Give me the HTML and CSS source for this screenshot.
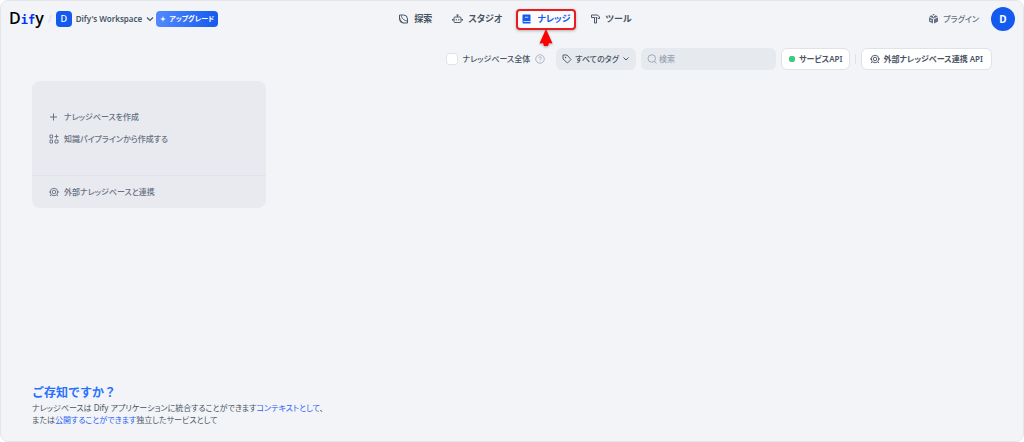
FILE: index.html
```html
<!DOCTYPE html>
<html lang="ja">
<head>
<meta charset="utf-8">
<meta name="viewport" content="width=device-width, initial-scale=1">
<title>ナレッジ - Dify</title>
<link rel="stylesheet" href="styles.css">
</head>
<body>
<svg class="defs" width="0" height="0" aria-hidden="true">
  <symbol id="target" viewBox="0 0 20 20"><g fill="none" stroke="currentColor" stroke-width="1.8"><circle cx="10" cy="10" r="7.500"/><circle cx="10" cy="10" r="3.500"/><path d="M0 10h3M17 10h3M4 16l-2 2M16 16l2 2"/></g></symbol>
</svg>
<div class="app">
  <header class="header">
    <div class="brand">
      <a class="logo" href="#">D<span class="logo-accent">if</span>y</a>
      <span class="slash">/</span>
      <button class="workspace" type="button">
        <span class="workspace-icon">D</span>
        <span>Dify's Workspace</span>
        <svg class="chevron" viewBox="0 0 8 8"><path d="M1 2.500l3 3 3-3" fill="none" stroke="currentColor" stroke-width="1.200"/></svg>
      </button>
      <button class="upgrade" type="button">
        <svg class="spark" viewBox="0 0 8 8"><path d="M4 0l.9 3.100L8 4l-3.100.9L4 8l-.9-3.100L0 4l3.100-.9z" fill="currentColor"/></svg>
        <span>アップグレード</span>
      </button>
    </div>
    <nav class="nav">
      <a class="nav-item" href="#">
        <svg class="nav-icon" viewBox="0 0 20 20"><g fill="none" stroke="currentColor" stroke-width="2"><path d="M2 2h8a8 8 0 0 1 8 8v8h-8a8 8 0 0 1-8-8z"/><path d="M6 3c-1 5 6 11 12 11M2 7c1 6 4 9 8 11"/></g></svg>
        <span>探索</span>
      </a>
      <a class="nav-item" href="#">
        <svg class="nav-icon" viewBox="0 0 22 20"><g fill="none" stroke="currentColor" stroke-width="1.900"><rect x="4" y="6" width="14" height="11" rx="2"/><path d="M11 6V2M8.500 2h5M1 10v3M21 10v3M8.500 10v3M13.500 10v3"/><path d="M1 11.500h3M18 11.500h3"/></g></svg>
        <span>スタジオ</span>
      </a>
      <a class="nav-item nav-item-active" href="#" aria-current="page">
        <svg class="nav-icon" viewBox="0 0 20 20"><path d="M4 1h13a1 1 0 0 1 1 1v17H4a2 2 0 0 1-2-2V3a2 2 0 0 1 2-2z" fill="currentColor"/><path d="M6.500 6.500h7" stroke="#fff" stroke-width="1.500"/><path d="M4 15h14" stroke="#fff" stroke-width="1.500"/></svg>
        <span>ナレッジ</span>
        <svg class="pointer" viewBox="0 0 14 18" aria-hidden="true"><path d="M7 0l6.500 14.500-3.500-.5L9 17H5l-1-3-3.500.5z" fill="#f00"/></svg>
      </a>
      <a class="nav-item" href="#">
        <svg class="nav-icon" viewBox="0 0 20 20"><path d="M2 2h12l4 4v3h-3l-2-2h-1v11H8V7H2z" fill="none" stroke="currentColor" stroke-width="2"/><path d="M8 7h5" stroke="currentColor"/></svg>
        <span>ツール</span>
      </a>
    </nav>
    <div class="account">
      <a class="plugins" href="#">
        <svg class="nav-icon" viewBox="0 0 20 20"><path d="M10 0l3 1.500L10 3 7 1.500zM5.500 2.500L9 4.300v2l1 .5 1-.5v-2l3.500-1.800L18.500 5 10 9 1.500 5zM1 6.500l8 4V19l-8-4zM19 6.500l-8 4V19l8-4z" fill="currentColor"/><path d="M3.500 11l2.500 1.200v2.300L3.500 13.300z" fill="#f2f4f7"/></svg>
        <span>プラグイン</span>
      </a>
      <button class="avatar" type="button">D</button>
    </div>
  </header>
  <main class="main">
    <div class="toolbar">
      <label class="all"><input class="check" type="checkbox"><span>ナレッジベース全体</span></label>
      <svg class="help" viewBox="0 0 20 20"><g fill="none" stroke="currentColor" stroke-width="1.500"><circle cx="10" cy="10" r="8.500"/><path d="M7.500 8a2.500 2.500 0 1 1 3.500 2.300c-.7.300-1 .7-1 1.700M10 13.500v1.500"/></g></svg>
      <button class="tags" type="button">
        <svg class="tool-icon" viewBox="0 0 20 20"><path d="M2 2h8l8 9-7 7-9-8z" fill="none" stroke="currentColor" stroke-width="1.800" stroke-linejoin="round"/><circle cx="7" cy="7" r="1.500" fill="currentColor"/></svg>
        <span>すべてのタグ</span>
        <svg class="chevron" viewBox="0 0 8 8"><path d="M1.500 2.500L4 5l2.500-2.500" fill="none" stroke="currentColor"/></svg>
      </button>
      <label class="search">
        <svg class="tool-icon" viewBox="0 0 20 20"><path d="M14 14l5 5M17 9A7.500 7.500 0 1 1 2 9a7.500 7.500 0 0 1 15 0z" fill="none" stroke="currentColor" stroke-width="1.800"/></svg>
        <input class="search-input" type="text" placeholder="検索" aria-label="検索">
      </label>
      <button class="btn btn-service" type="button"><span class="dot"></span><span>サービスAPI</span></button>
      <span class="divider"></span>
      <button class="btn btn-external" type="button"><svg class="tool-icon"><use href="#target"/></svg><span>外部ナレッジベース連携 API</span></button>
    </div>
    <section class="card">
      <div class="card-actions">
        <a class="card-link" href="#"><svg class="card-icon" viewBox="0 0 20 20"><path d="M9 3v14M2 10h14" stroke="currentColor" stroke-width="2"/></svg><span>ナレッジベースを作成</span></a>
        <a class="card-link" href="#"><svg class="card-icon" viewBox="0 0 20 20"><path d="M2 2h5v6H2zM2 12h5v6H2zM12 12h6v6h-6zM15 1v8M11 5h8" fill="none" stroke="currentColor" stroke-width="1.800"/></svg><span>知識パイプラインから作成する</span></a>
      </div>
      <a class="card-link card-footer" href="#"><svg class="card-icon"><use href="#target"/></svg><span>外部ナレッジベースと連携</span></a>
    </section>
  </main>
  <footer class="footer">
    <h2 class="footer-title">ご存知ですか？</h2>
    <p class="footer-text">ナレッジベースは Dify アプリケーションに統合することができます<a class="link" href="#">コンテキストとして</a>、<br>または<a class="link" href="#">公開することができます</a>独立したサービスとして</p>
  </footer>
</div>
</body>
</html>
```
FILE: styles.css
```css
* { box-sizing: border-box; }
body {
  margin: 0;
  background: #fff;
  color: #495464;
  font-family: "Noto Sans", "Noto Sans CJK JP", sans-serif;
  font-size: 8px;
  line-height: 16px;
  font-feature-settings: "palt";
}
button, input { font: inherit; font-feature-settings: inherit; color: inherit; margin: 0; }
button { border: 0; padding: 0; background: none; white-space: nowrap; }
a { color: inherit; text-decoration: none; }
svg { flex: none; display: block; }
.defs { position: absolute; }
.app {
  min-height: 100vh;
  display: flex;
  flex-direction: column;
  background: #f2f4f7;
  border: 1px solid #e4e6ea;
  border-radius: 8px;
}
.header {
  display: grid;
  grid-template-columns: 1fr auto 1fr;
  align-items: center;
  height: 36px;
  padding: 0 8px;
}
.brand { display: flex; align-items: center; }
.logo { font-family: "Open Sans", sans-serif; font-size: 16px; line-height: 20px; font-weight: 600; color: #000; }
.logo-accent { color: #0033ff; font-family: "DejaVu Sans Mono", monospace; font-size: 12px; font-weight: 700; }
.slash { width: 12px; font-size: 10px; text-align: center; color: #d5d9e0; }
.workspace { display: flex; align-items: center; gap: 4px; font-weight: 600; }
.workspace-icon { width: 16px; height: 16px; border-radius: 4px; background: #155aef; color: #fff; font-size: 9px; font-weight: 500; }
.chevron { width: 8px; height: 8px; }
.upgrade {
  display: flex;
  align-items: center;
  gap: 3px;
  height: 16px;
  margin-left: 2px;
  padding: 0 4px;
  border-radius: 4px;
  background: linear-gradient(90deg, #5289ff, #155aef);
  color: #fff;
  font-size: 7px;
  font-weight: 700;
}
.spark { width: 6px; height: 6px; }
.nav { display: flex; align-items: center; gap: 8px; margin-left: 6px; font-size: 9px; font-weight: 600; }
.nav-item { position: relative; display: flex; align-items: center; gap: 5px; height: 21px; padding: 0 6px; white-space: nowrap; }
.nav-item-active { padding: 0 3px; color: #155aef; background: #fcfcfd; border: 2px solid #e91c24; border-radius: 4px; box-shadow: 0 1px 3px #0004; }
.nav-icon { width: 11px; height: 10px; }
.pointer { position: absolute; top: 18px; left: calc(50% - 7px); width: 14px; height: 18px; filter: drop-shadow(0 1px 1px #0005); }
.account { display: flex; align-items: center; justify-content: flex-end; gap: 12px; }
.plugins { display: flex; align-items: center; gap: 4px; color: #676f83; font-weight: 500; }
.avatar { width: 24px; height: 24px; border-radius: 50%; background: #155aef; color: #fff; font-size: 10px; font-weight: 700; }
.main { flex: 1; padding: 11px 31px 0; }
.toolbar { display: flex; align-items: center; justify-content: flex-end; height: 22px; font-weight: 500; }
.all { display: flex; align-items: center; gap: 5px; white-space: nowrap; }
.check { appearance: none; width: 12px; height: 12px; border: 1px solid #dfe3e8; border-radius: 3px; background: #fff; }
.help { width: 10px; height: 10px; margin: 0 11px 0 5px; color: #98a2b2; }
.tool-icon { width: 10px; height: 10px; }
.tags { display: flex; align-items: center; gap: 3px; height: 22px; padding: 0 6px; border-radius: 6px; background: #e6e9ee; }
.search { display: flex; align-items: center; gap: 2px; width: 135px; height: 22px; margin: 0 5px; padding: 0 6px; border-radius: 6px; background: #e6e9ee; color: #98a2b2; }
.search-input { width: 100%; min-width: 0; padding: 0; border: 0; outline: 0; background: none; }
.search-input::placeholder { color: #98a2b2; opacity: 1; }
.btn { display: flex; align-items: center; justify-content: center; gap: 4px; height: 22px; padding: 0 7px; border: 1px solid #dfe3e8; border-radius: 6px; background: #fff; font-weight: 600; }
.dot { width: 6px; height: 6px; border-radius: 2px; background: #3ccb7f; }
.btn-external { gap: 3px; padding: 0 8px; }
.divider { width: 1px; height: 10px; margin: 0 5px; background: #dfe3e8; }
.card { width: 234px; margin-top: 11px; border-radius: 8px; background: #e8eaef; color: #676f83; font-weight: 500; }
.card-actions { display: grid; gap: 6px; padding: 28px 17px; }
.card-link { display: flex; align-items: center; gap: 5px; }
.card-icon { width: 10px; height: 10px; }
.card-footer { padding: 8px 17px; border-top: 1px solid #e0e3e9; }
.footer { padding: 0 31px 15px; }
.footer-title { margin: 0; color: #2970ff; font-size: 12px; line-height: 18px; font-weight: 600; font-feature-settings: normal; }
.footer-text { margin: 0; line-height: 12px; }
.link { color: #2b62f0; }
```
